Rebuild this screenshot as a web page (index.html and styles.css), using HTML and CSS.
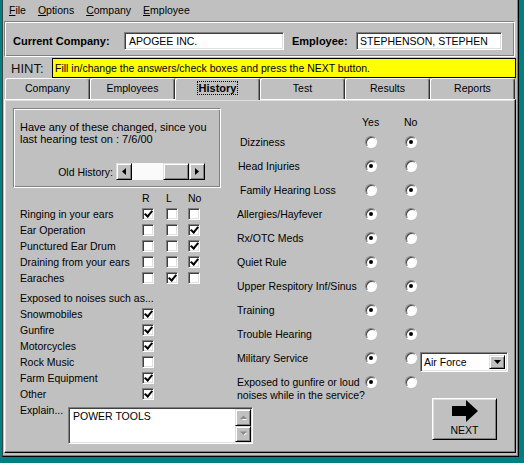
FILE: index.html
```html
<!DOCTYPE html>
<html>
<head>
<meta charset="utf-8">
<title>History</title>
<link rel="stylesheet" href="styles.css">
</head>
<body>
<div class="window">
  <div class="menubar">
    <span class="menu"><u>F</u>ile</span>
    <span class="menu"><u>O</u>ptions</span>
    <span class="menu"><u>C</u>ompany</span>
    <span class="menu"><u>E</u>mployee</span>
  </div>

  <div class="header-panel">
    <span class="hlabel company-label">Current Company:</span>
    <div class="field company-field">APOGEE INC.</div>
    <span class="hlabel emp-label">Employee:</span>
    <div class="field emp-field">STEPHENSON, STEPHEN</div>
  </div>

  <div class="hint-row">
    <span class="hint-label">HINT:</span>
    <div class="hint-box">Fill in/change the answers/check boxes and press the NEXT button.</div>
  </div>

  <div class="tabs">
    <div class="tab">Company</div>
    <div class="tab">Employees</div>
    <div class="tab tab-active"><span class="focus">History</span></div>
    <div class="tab">Test</div>
    <div class="tab">Results</div>
    <div class="tab">Reports</div>
  </div>

  <div class="panel">
    <div class="left-col">
      <div class="groupbox">
        <p class="gb-text">Have any of these changed, since you<br>last hearing test on : 7/6/00</p>
        <div class="oldhist">
          <span class="oh-label">Old History:</span>
          <div class="hscroll">
            <div class="sbtn"><svg width="4" height="7" viewBox="0 0 4 7"><polygon points="4,0 0,3.5 4,7" fill="#000"/></svg></div>
            <div class="track"></div>
            <div class="thumb"></div>
            <div class="sbtn"><svg width="4" height="7" viewBox="0 0 4 7"><polygon points="0,0 4,3.5 0,7" fill="#000"/></svg></div>
          </div>
        </div>
      </div>

      <div class="checkgrid">
        <span></span><span class="colhead">R</span><span class="colhead">L</span><span class="colhead">No</span>

        <span>Ringing in your ears</span><span class="cb on"></span><span class="cb"></span><span class="cb"></span>
        <span>Ear Operation</span><span class="cb"></span><span class="cb"></span><span class="cb on"></span>
        <span>Punctured Ear Drum</span><span class="cb"></span><span class="cb"></span><span class="cb on"></span>
        <span>Draining from your ears</span><span class="cb"></span><span class="cb"></span><span class="cb on"></span>
        <span>Earaches</span><span class="cb"></span><span class="cb on"></span><span class="cb"></span>
      </div>

      <div class="noisegrid">
        <span class="noise-title">Exposed to noises such as...</span>
        <span>Snowmobiles</span><span class="cb on"></span>
        <span>Gunfire</span><span class="cb on"></span>
        <span>Motorcycles</span><span class="cb on"></span>
        <span>Rock Music</span><span class="cb"></span>
        <span>Farm Equipment</span><span class="cb on"></span>
        <span>Other</span><span class="cb on"></span>
      </div>

      <div class="explain-row">
        <span class="explain-label">Explain...</span>
        <div class="memo">
          <div class="memo-text">POWER TOOLS</div>
          <div class="memo-scroll">
            <div class="mbtn"><svg width="7" height="5" viewBox="0 0 7 5"><polygon points="1,4 3.5,1.5 6,4" fill="#fff" transform="translate(1,1)"/><polygon points="0,4 3.5,0.5 7,4" fill="#8a8a8a"/></svg></div>
            <div class="mbtn"><svg width="7" height="5" viewBox="0 0 7 5"><polygon points="1,1 3.5,3.5 6,1" fill="#fff" transform="translate(1,1)"/><polygon points="0,0.5 3.5,4 7,0.5" fill="#8a8a8a"/></svg></div>
          </div>
        </div>
      </div>
    </div>

    <div class="right-col">
      <div class="radiogrid">
        <span></span><span class="yes-head">Yes</span><span class="no-head">No</span><span></span>

        <span class="ind3">Dizziness</span><span class="radio"></span><span class="radio on"></span><span></span>
        <span class="ind1">Head Injuries</span><span class="radio on"></span><span class="radio"></span><span></span>
        <span class="ind3">Family Hearing Loss</span><span class="radio"></span><span class="radio on"></span><span></span>
        <span>Allergies/Hayfever</span><span class="radio on"></span><span class="radio"></span><span></span>
        <span>Rx/OTC Meds</span><span class="radio on"></span><span class="radio"></span><span></span>
        <span>Quiet Rule</span><span class="radio on"></span><span class="radio"></span><span></span>
        <span>Upper Respitory Inf/Sinus</span><span class="radio"></span><span class="radio on"></span><span></span>
        <span>Training</span><span class="radio on"></span><span class="radio"></span><span></span>
        <span>Trouble Hearing</span><span class="radio"></span><span class="radio on"></span><span></span>
        <span>Military Service</span><span class="radio on"></span><span class="radio"></span>
        <div class="combo">
          <span class="combo-text">Air Force</span>
          <div class="combo-btn"><svg width="7" height="4" viewBox="0 0 7 4"><polygon points="0,0 7,0 3.5,4" fill="#000"/></svg></div>
        </div>
        <span class="two-line">Exposed to gunfire or loud<br>noises while in the service?</span><span class="radio on top"></span><span class="radio top"></span><span></span>
      </div>

      <div class="next-btn">
        <svg width="26" height="22" viewBox="0 0 26 22">
          <polygon points="0,6 14,6 14,0 26,11 14,22 14,16 0,16" fill="#000"/>
          <polygon points="1,7 14,7 14,6 14,7" fill="#333"/>
        </svg>
        <span class="next-label">NEXT</span>
      </div>
    </div>
  </div>
</div>
</body>
</html>
```

FILE: styles.css
```css
* {
  box-sizing: border-box;
}

body {
  margin: 0;
  background: #008080;
  font-family: "Liberation Sans", Arial, sans-serif;
  font-size: 10.5px;
  color: #000;
}

.window {
  margin-left: 2px;
  width: 517px;
  height: 457px;
  background: #c0c0c0;
  border-left: 1px solid #404040;
  border-right: 1px solid #000;
  border-bottom: 1px solid #000;
  box-shadow: inset -1px -1px #808080;
}

/* menu */
.menubar {
  display: flex;
  align-items: center;
  gap: 12px;
  height: 19px;
  padding-left: 6px;
}

.menu u {
  text-decoration: underline;
}

/* header */
.header-panel {
  display: flex;
  align-items: center;
  margin: 2px 0 0 1px;
  width: 511px;
  height: 36px;
  padding: 3px 0 0 8px;
  border: 1px solid #808080;
  border-right-color: #fff;
  border-bottom-color: #fff;
  box-shadow: inset 1px 1px #fff, inset -1px -1px #808080;
}

.hlabel {
  font-weight: bold;
  font-size: 11px;
}

.company-label {
  width: 111px;
}

.emp-label {
  width: 64px;
  margin-left: 8px;
}

.field {
  height: 18px;
  background: #fff;
  border: 1px solid;
  border-color: #808080 #fff #fff #808080;
  box-shadow: inset 1px 1px #404040, inset -1px -1px #dfdfdf;
  padding-left: 4px;
  line-height: 16px;
  font-size: 10.5px;
  white-space: nowrap;
}

.company-field {
  width: 160px;
}

.emp-field {
  width: 146px;
  padding-left: 3px;
}

/* hint */
.hint-row {
  display: flex;
  align-items: center;
  height: 20px;
  margin-top: 1px;
}

.hint-label {
  width: 49px;
  padding-left: 8px;
  font-size: 13px;
  color: #111;
}

.hint-box {
  width: 464px;
  height: 20px;
  background: #ffff00;
  border: 1px solid #000;
  padding-left: 2px;
  line-height: 18px;
  white-space: nowrap;
}

/* tabs */
.tabs {
  display: flex;
  margin-left: 2px;
  height: 21px;
}

.tab {
  width: 85px;
  height: 21px;
  border-top: 1px solid #fff;
  border-left: 1px solid #fff;
  border-right: 1px solid #303030;
  box-shadow: inset -1px 0 #808080;
  border-radius: 3px 3px 0 0;
  text-align: center;
  line-height: 19px;
}

.tab-active {
  position: relative;
  z-index: 1;
  height: 22px;
  background: #c0c0c0;
  font-weight: bold;
  font-size: 11px;
}

.focus {
  border: 1px dotted #000;
  padding: 0 1px;
}

/* panel */
.panel {
  display: flex;
  margin-left: 1px;
  width: 512px;
  height: 354px;
  padding: 8px 0 0 8px;
  border-top: 1px solid #fff;
  border-left: 1px solid #fff;
  border-right: 1px solid #000;
  border-bottom: 1px solid #000;
  box-shadow: inset -1px -1px #808080, inset 1px 1px #dfdfdf;
}

.left-col {
  width: 224px;
  flex: none;
}

.groupbox {
  width: 208px;
  height: 80px;
  padding: 12px 6px 0 6px;
  border: 1px solid #808080;
  border-right-color: #fff;
  border-bottom-color: #fff;
  box-shadow: inset 1px 1px #fff, inset -1px -1px #808080;
}

.gb-text {
  margin: 0;
  font-size: 11px;
  line-height: 12px;
  white-space: nowrap;
}

.oldhist {
  display: flex;
  justify-content: flex-end;
  align-items: center;
  margin: 18px 9px 0 0;
}

.oh-label {
  margin-right: 3px;
}

.hscroll {
  display: flex;
  width: 89px;
  height: 17px;
}

.sbtn {
  width: 16px;
  height: 17px;
  display: flex;
  align-items: center;
  justify-content: center;
  border: 1px solid;
  border-color: #dfdfdf #000 #000 #dfdfdf;
  box-shadow: inset 1px 1px #fff, inset -1px -1px #808080;
}

.track {
  width: 31px;
  background: #fafafa;
}

.thumb {
  width: 26px;
  border: 1px solid;
  border-color: #dfdfdf #000 #000 #dfdfdf;
  box-shadow: inset 1px 1px #fff, inset -1px -1px #808080;
}

/* checkboxes */
.checkgrid {
  display: grid;
  grid-template-columns: 122px 24px 22px 12px;
  grid-auto-rows: 16px;
  align-items: center;
  margin-top: 2px;
  padding-left: 7px;
  white-space: nowrap;
}

.noisegrid {
  display: grid;
  grid-template-columns: 122px 12px;
  grid-auto-rows: 16px;
  align-items: center;
  margin-top: 4px;
  padding-left: 7px;
  white-space: nowrap;
}

.noise-title {
  grid-column: 1 / -1;
}

.cb {
  width: 12px;
  height: 12px;
  background: #fff;
  border: 1px solid;
  border-color: #808080 #fff #fff #808080;
  box-shadow: inset 1px 1px #404040, inset -1px -1px #dfdfdf;
  display: flex;
  align-items: center;
  justify-content: center;
}

.cb.on::after {
  content: "";
  width: 3px;
  height: 6px;
  margin-top: -2px;
  border: solid #000;
  border-width: 0 2px 2px 0;
  transform: rotate(40deg);
}

/* explain */
.explain-row {
  display: flex;
  margin-top: 2px;
  padding-left: 7px;
}

.explain-label {
  width: 48px;
  flex: none;
  line-height: 12px;
}

.memo {
  display: flex;
  flex: none;
  width: 185px;
  height: 37px;
  margin-top: 3px;
  background: #fff;
  border: 1px solid;
  border-color: #808080 #fff #fff #808080;
  box-shadow: inset 1px 1px #404040, inset -1px -1px #dfdfdf;
  padding: 1px 1px 1px 1px;
}

.memo-text {
  flex: 1;
  padding: 1px 3px;
  line-height: 12px;
}

.memo-scroll {
  display: flex;
  flex-direction: column;
  width: 16px;
}

.mbtn {
  flex: 1;
  display: flex;
  align-items: center;
  justify-content: center;
  background: #c0c0c0;
  border: 1px solid;
  border-color: #dfdfdf #000 #000 #dfdfdf;
  box-shadow: inset 1px 1px #fff, inset -1px -1px #808080;
}

/* radios */
.right-col {
  flex: 1;
  padding-top: 6px;
}

.radiogrid {
  display: grid;
  grid-template-columns: 128px 40px 15px 88px;
  grid-template-rows: 16px;
  grid-auto-rows: 24px;
  align-items: center;
  white-space: nowrap;
}

.yes-head {
  margin-left: -3px;
}

.no-head {
  margin-left: -1px;
}

.ind3 {
  padding-left: 3px;
}

.ind1 {
  padding-left: 1px;
}

.radio {
  width: 12px;
  height: 12px;
  border-radius: 50%;
  background: #fff;
  border: 1px solid;
  border-color: #808080 #fff #fff #808080;
  box-shadow: inset 1px 1px #404040;
  display: flex;
  align-items: center;
  justify-content: center;
}

.radio.on::after {
  content: "";
  width: 4px;
  height: 4px;
  border-radius: 50%;
  background: #000;
}

.radio.top {
  align-self: start;
  margin-top: 6px;
}

.two-line {
  align-self: start;
  padding-top: 6px;
  line-height: 13px;
}

.combo {
  align-self: start;
  margin-top: 6px;
  display: flex;
  width: 88px;
  height: 20px;
  background: #fff;
  border: 1px solid;
  border-color: #808080 #fff #fff #808080;
  box-shadow: inset 1px 1px #404040, inset -1px -1px #dfdfdf;
  padding: 2px;
}

.combo-text {
  flex: 1;
  padding-left: 1px;
  line-height: 14px;
}

.combo-btn {
  width: 16px;
  display: flex;
  align-items: center;
  justify-content: center;
  background: #c0c0c0;
  border: 1px solid;
  border-color: #dfdfdf #000 #000 #dfdfdf;
  box-shadow: inset 1px 1px #fff, inset -1px -1px #808080;
}

/* next button */
.next-btn {
  display: flex;
  flex-direction: column;
  align-items: center;
  width: 65px;
  height: 42px;
  margin: 4px 0 0 195px;
  padding-top: 0;
  border: 1px solid;
  border-color: #fff #000 #000 #fff;
  box-shadow: inset 1px 1px #dfdfdf, inset -1px -1px #808080;
}

.next-btn svg {
  margin-top: 1px;
}

.next-label {
  margin-top: 2px;
  line-height: 12px;
}
```
